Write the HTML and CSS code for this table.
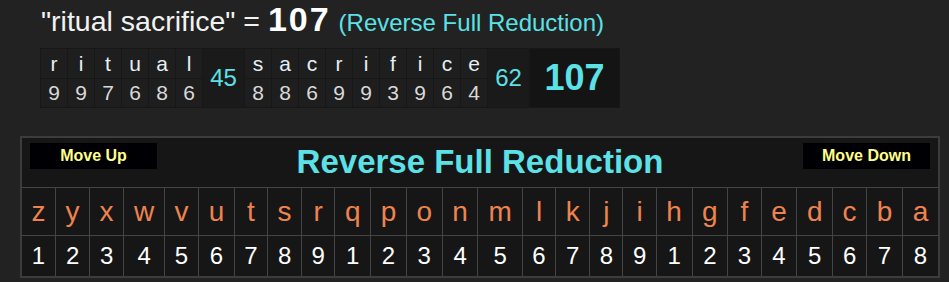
FILE: index.html
```html
<!DOCTYPE html>
<html>
<head>
<meta charset="utf-8">
<title>Gematria</title>
<link rel="stylesheet" href="styles.css">
</head>
<body>
<div class="page">
  <h1 class="heading"><span class="phrase">"ritual sacrifice" = </span><b class="total">107</b> <span class="cipher">(Reverse Full Reduction)</span></h1>

  <table class="breakdown">
    <tr>
      <td class="ch">r</td><td class="ch">i</td><td class="ch">t</td><td class="ch">u</td><td class="ch">a</td><td class="ch">l</td>
      <td class="sum" rowspan="2">45</td>
      <td class="ch">s</td><td class="ch">a</td><td class="ch">c</td><td class="ch">r</td><td class="ch">i</td><td class="ch">f</td><td class="ch">i</td><td class="ch">c</td><td class="ch">e</td>
      <td class="sum" rowspan="2">62</td>
      <td class="grand" rowspan="2">107</td>
    </tr>
    <tr>
      <td class="num">9</td><td class="num">9</td><td class="num">7</td><td class="num">6</td><td class="num">8</td><td class="num">6</td>
      <td class="num">8</td><td class="num">8</td><td class="num">6</td><td class="num">9</td><td class="num">9</td><td class="num">3</td><td class="num">9</td><td class="num">6</td><td class="num">4</td>
    </tr>
  </table>

  <table class="cipher-table">
    <tr>
      <td class="head-cell" colspan="26">
        <div class="head-bar">
          <button class="move">Move Up</button>
          <span class="cipher-title">Reverse Full Reduction</span>
          <button class="move">Move Down</button>
        </div>
      </td>
    </tr>
    <tr class="letters">
      <td>z</td><td>y</td><td>x</td><td>w</td><td>v</td><td>u</td><td>t</td><td>s</td><td>r</td><td>q</td><td>p</td><td>o</td><td>n</td><td>m</td><td>l</td><td>k</td><td>j</td><td>i</td><td>h</td><td>g</td><td>f</td><td>e</td><td>d</td><td>c</td><td>b</td><td>a</td>
    </tr>
    <tr class="values">
      <td>1</td><td>2</td><td>3</td><td>4</td><td>5</td><td>6</td><td>7</td><td>8</td><td>9</td><td>1</td><td>2</td><td>3</td><td>4</td><td>5</td><td>6</td><td>7</td><td>8</td><td>9</td><td>1</td><td>2</td><td>3</td><td>4</td><td>5</td><td>6</td><td>7</td><td>8</td>
    </tr>
  </table>
</div>
</body>
</html>
```
FILE: styles.css
```css
html, body {
  margin: 0;
  padding: 0;
  background: #222222;
  font-family: "Liberation Sans", Arial, sans-serif;
}

.page {
  padding-top: 2px;
}

.heading {
  margin: 0 0 0 41px;
  font-weight: normal;
  font-size: 28.5px;
  line-height: 34px;
  color: #f2f2f2;
  white-space: nowrap;
}

.total {
  font-size: 34px;
  letter-spacing: 2px;
  font-weight: bold;
  color: #ffffff;
}

.cipher {
  font-size: 24px;
  color: #5ce1e6;
}

.breakdown {
  margin: 8px 0 0 40px;
  border-collapse: separate;
  border-spacing: 1px;
  background: #171717;
}

.breakdown td {
  padding: 0;
  text-align: center;
  vertical-align: middle;
}

.ch {
  width: 26px;
  height: 29px;
  background: #1e1e1e;
  color: #e6eef6;
  font-size: 21px;
}

.num {
  height: 28px;
  background: #1e1e1e;
  color: #d9d9d9;
  font-size: 21px;
}

.sum {
  width: 41px;
  background: #1a1a1a;
  color: #5ce1e6;
  font-size: 24px;
}

.grand {
  width: 89px;
  background: #141414;
  color: #5ce1e6;
  font-size: 36px;
  font-weight: bold;
}

.cipher-table {
  margin: 28px 0 0 20px;
  width: 920px;
  border-collapse: collapse;
  border: 2px solid #3c3c3c;
  background: #161616;
}

.cipher-table td {
  border: 1px solid #444444;
  text-align: center;
  vertical-align: middle;
  padding: 0 7.7px;
}

.cipher-table td.head-cell {
  padding: 5px 8px 0 8px;
  vertical-align: top;
}

.head-bar {
  display: flex;
  justify-content: space-between;
  align-items: flex-start;
  height: 44px;
}

.move {
  width: 127px;
  height: 26px;
  padding: 0;
  border: 0;
  background: #000004;
  color: #ffff88;
  font-family: "Liberation Sans", Arial, sans-serif;
  font-weight: bold;
  font-size: 16px;
  line-height: 26px;
}

.cipher-title {
  font-size: 33px;
  font-weight: bold;
  line-height: 37px;
  color: #5ce1e6;
}

.letters td {
  height: 47px;
  color: #ee8350;
  font-size: 28px;
}

.values td {
  height: 40px;
  color: #ffffff;
  font-size: 24px;
}
```
